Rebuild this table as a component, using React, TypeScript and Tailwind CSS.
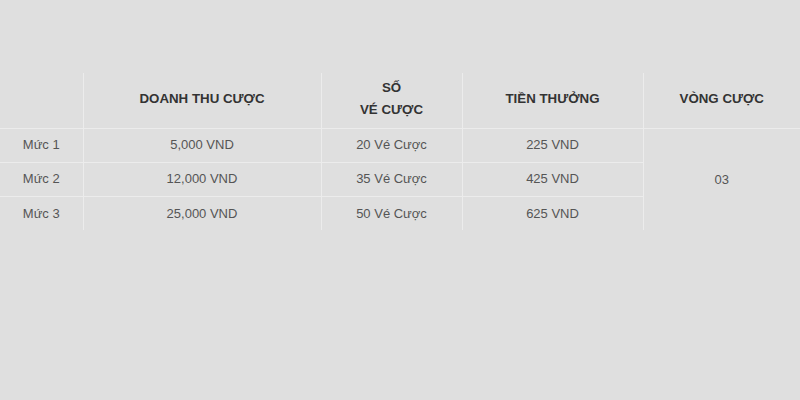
export default function App() {
  const rows = [
    { muc: "Mức 1", doanh: "5,000 VND", ve: "20 Vé Cược", thuong: "225 VND" },
    { muc: "Mức 2", doanh: "12,000 VND", ve: "35 Vé Cược", thuong: "425 VND" },
    { muc: "Mức 3", doanh: "25,000 VND", ve: "50 Vé Cược", thuong: "625 VND" },
  ];

  const cell = "border border-[#ececec] text-center align-middle";

  return (
    <div
      className="w-[800px] h-[400px] bg-[#dfdfdf] pt-[73px]"
      style={{ fontFamily: '"Liberation Sans", Arial, sans-serif' }}
    >
      <table className="w-[800px] table-fixed border-collapse text-[13px] text-[#555]">
        <colgroup>
          <col className="w-[83px]" />
          <col className="w-[238px]" />
          <col className="w-[141px]" />
          <col className="w-[181px]" />
          <col className="w-[157px]" />
        </colgroup>
        <thead>
          <tr className="h-[55px] text-[#333] text-[13.3px] font-bold uppercase">
            <th className={`${cell} border-t-0 border-l-0`}></th>
            <th className={`${cell} border-t-0 pb-[2px]`}>DOANH THU CƯỢC</th>
            <th className={`${cell} border-t-0 leading-[22px] pb-[2px]`}>
              SỐ
              <br />
              VÉ CƯỢC
            </th>
            <th className={`${cell} border-t-0 pb-[2px]`}>TIỀN THƯỞNG</th>
            <th className={`${cell} border-t-0 border-r-0 pb-[2px]`}>VÒNG CƯỢC</th>
          </tr>
        </thead>
        <tbody>
          {rows.map((r, i) => (
            <tr key={r.muc} className="h-[34px]">
              <td className={`${cell} border-l-0 ${i === 2 ? "border-b-0" : ""}`}>{r.muc}</td>
              <td className={`${cell} ${i === 2 ? "border-b-0" : ""}`}>{r.doanh}</td>
              <td className={`${cell} ${i === 2 ? "border-b-0" : ""}`}>{r.ve}</td>
              <td className={`${cell} ${i === 2 ? "border-b-0" : ""}`}>{r.thuong}</td>
              {i === 0 && (
                <td rowSpan={3} className={`${cell} border-r-0 border-b-0`}>
                  03
                </td>
              )}
            </tr>
          ))}
        </tbody>
      </table>
    </div>
  );
}
